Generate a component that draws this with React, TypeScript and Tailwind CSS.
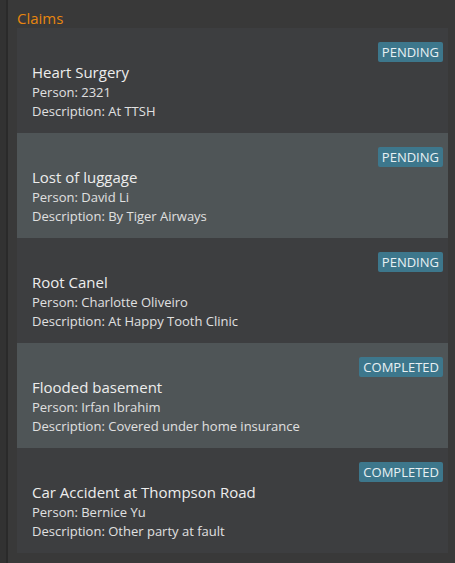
import React from "react";

interface Claim {
  name: string;
  person: string;
  description: string;
  status: "PENDING" | "COMPLETED";
}

const claims: Claim[] = [
  { name: "Heart Surgery", person: "2321", description: "At TTSH", status: "PENDING" },
  { name: "Lost of luggage", person: "David Li", description: "By Tiger Airways", status: "PENDING" },
  { name: "Root Canel", person: "Charlotte Oliveiro", description: "At Happy Tooth Clinic", status: "PENDING" },
  { name: "Flooded basement", person: "Irfan Ibrahim", description: "Covered under home insurance", status: "COMPLETED" },
  { name: "Car Accident at Thompson Road", person: "Bernice Yu", description: "Other party at fault", status: "COMPLETED" },
];

const ClaimCard: React.FC<{ claim: Claim; index: number }> = ({ claim, index }) => {
  const alt = index % 2 === 1;
  return (
    <div className={`h-[105px] pl-[15px] pr-[5px] pt-[14px] ${alt ? "bg-[#4f5557]" : "bg-[#3d3e40]"}`}>
      <div className="flex justify-end">
        <span className="h-[20px] rounded-[2px] bg-[#3d778c] px-[4px] text-[13px] leading-[20px] text-[#e8f0f3]">
          {claim.status}
        </span>
      </div>
      <div className="text-[15px] font-medium leading-[20px] text-[#ededed]">{claim.name}</div>
      <div className="mt-[1px] text-[13px] leading-[19px] text-[#e0e0e0]">Person: {claim.person}</div>
      <div className="text-[13px] leading-[19px] text-[#e0e0e0]">Description: {claim.description}</div>
    </div>
  );
};

export default function App() {
  return (
    <div
      className="flex h-[563px] w-[455px] overflow-hidden bg-[#393939]"
      style={{ fontFamily: '"Open Sans", "Noto Sans", sans-serif' }}
    >
      <div className="w-[6px] bg-[#323232]" />
      <div className="w-[2px] bg-[#2a2a2a]" />
      <div className="flex-1 pl-[9px] pr-[7px]">
        <div className="h-[28px] pt-[6px] text-[15px] font-medium leading-[24px] text-[#e8860f]">Claims</div>
        <div className="flex flex-col">
          {claims.map((c, i) => (
            <ClaimCard key={c.name} claim={c} index={i} />
          ))}
        </div>
      </div>
    </div>
  );
}
